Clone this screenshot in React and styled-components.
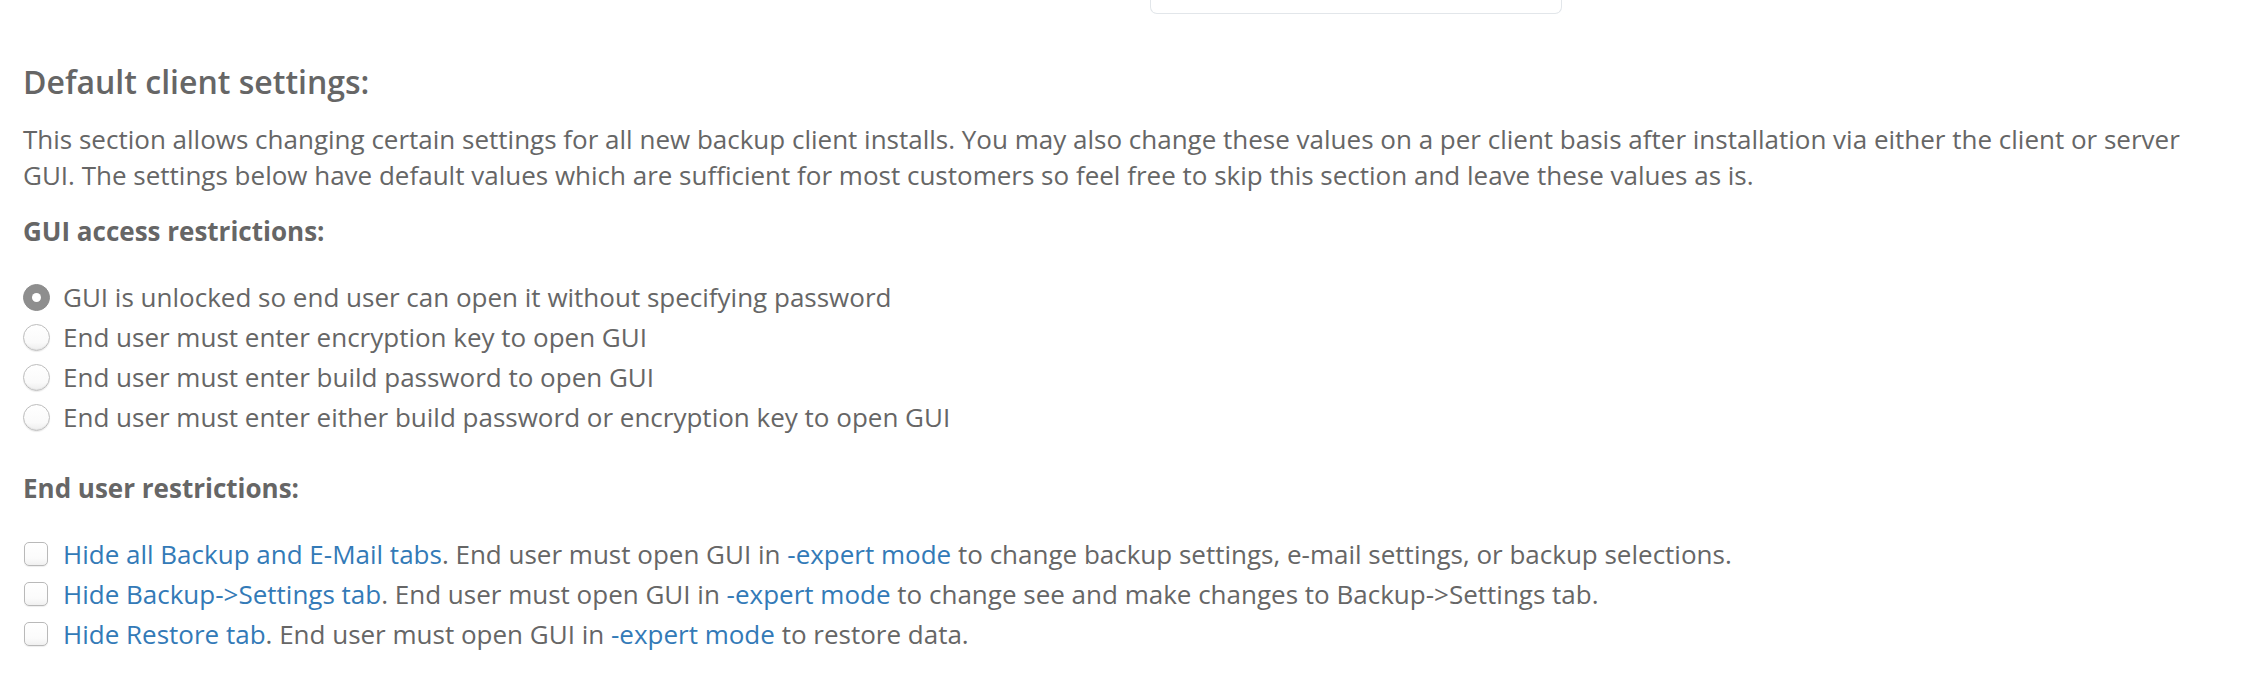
import React from "react";
import styled, { createGlobalStyle } from "styled-components";

const Global = createGlobalStyle`
  html, body { margin: 0; padding: 0; background: #fff; }
  body {
    font-family: "Open Sans", "Noto Sans", "Liberation Sans", sans-serif;
    color: #666;
    -webkit-font-smoothing: antialiased;
  }
`;

const Page = styled.div`
  width: 2248px;
  height: 676px;
  overflow: hidden;
  background: #fff;
`;

const FieldTail = styled.div`
  margin-left: 1150px;
  width: 410px;
  height: 13px;
  border: 1.5px solid #e2e6ea;
  border-top: none;
  border-radius: 0 0 7px 7px;
  background: #fff;
`;

const Section = styled.section`
  padding: 0 24px 0 23px;
`;

const Title = styled.h4`
  margin: 50px 0 0;
  font-size: 32px;
  line-height: 35px;
  font-weight: 600;
  color: #666;
`;

const Intro = styled.p`
  margin: 22px 0 0;
  font-size: 26px;
  line-height: 36px;
`;

const SubHeading = styled.div`
  margin-top: ${(p) => p.$top}px;
  font-size: 26px;
  line-height: 32px;
  font-weight: 700;
  color: #666;
`;

const OptionList = styled.div`
  margin-top: ${(p) => p.$top}px;
  display: flex;
  flex-direction: column;
`;

const OptionRow = styled.label`
  display: flex;
  align-items: center;
  height: 40px;
  font-size: 26px;
  line-height: 32px;
  color: #666;
  white-space: nowrap;
`;

const Radio = styled.span`
  box-sizing: border-box;
  flex: none;
  width: 27px;
  height: 27px;
  margin-right: 13px;
  border-radius: 50%;
  display: flex;
  align-items: center;
  justify-content: center;
  border: 1px solid ${(p) => (p.$checked ? "#8c8c8c" : "#bdbdbd")};
  background: ${(p) =>
    p.$checked ? "#8e8e8e" : "linear-gradient(#ffffff, #fafafa 70%, #eeeeee)"};
  box-shadow: ${(p) =>
    p.$checked ? "none" : "inset 0 -1px 1px rgba(0,0,0,0.06), 0 1px 1px rgba(0,0,0,0.08)"};

  &::after {
    content: "";
    display: ${(p) => (p.$checked ? "block" : "none")};
    width: 9px;
    height: 9px;
    border-radius: 50%;
    background: #fff;
  }
`;

const Check = styled.span`
  box-sizing: border-box;
  flex: none;
  width: 24px;
  height: 24px;
  margin-left: 1px;
  margin-right: 15px;
  border-radius: 5px;
  border: 1px solid #b9b9b9;
  background: linear-gradient(#ffffff, #fbfbfb 70%, #f0f0f0);
  box-shadow: 0 1px 1px rgba(0,0,0,0.07);
`;

const Link = styled.a`
  color: #337ab7;
  text-decoration: none;
`;

const radios = [
  "GUI is unlocked so end user can open it without specifying password",
  "End user must enter encryption key to open GUI",
  "End user must enter build password to open GUI",
  "End user must enter either build password or encryption key to open GUI",
];

const checks = [
  {
    link: "Hide all Backup and E-Mail tabs",
    rest: " to change backup settings, e-mail settings, or backup selections.",
  },
  {
    link: "Hide Backup->Settings tab",
    rest: " to change see and make changes to Backup->Settings tab.",
  },
  {
    link: "Hide Restore tab",
    rest: " to restore data.",
  },
];

export default function App() {
  return (
    <Page>
      <Global />
      <FieldTail />
      <Section>
        <Title>Default client settings:</Title>
        <Intro>
          This section allows changing certain settings for all new backup client installs. You may
          also change these values on a per client basis after installation via either the client or
          server GUI. The settings below have default values which are sufficient for most customers
          so feel free to skip this section and leave these values as is.
        </Intro>
        <SubHeading $top={22}>GUI access restrictions:</SubHeading>
        <OptionList $top={30}>
          {radios.map((r, i) => (
            <OptionRow key={r}>
              <Radio $checked={i === 0} />
              {r}
            </OptionRow>
          ))}
        </OptionList>
        <SubHeading $top={35}>End user restrictions:</SubHeading>
        <OptionList $top={30}>
          {checks.map((c) => (
            <OptionRow key={c.link}>
              <Check />
              <span>
                <Link>{c.link}</Link>. End user must open GUI in <Link>-expert mode</Link>
                {c.rest}
              </span>
            </OptionRow>
          ))}
        </OptionList>
      </Section>
    </Page>
  );
}
